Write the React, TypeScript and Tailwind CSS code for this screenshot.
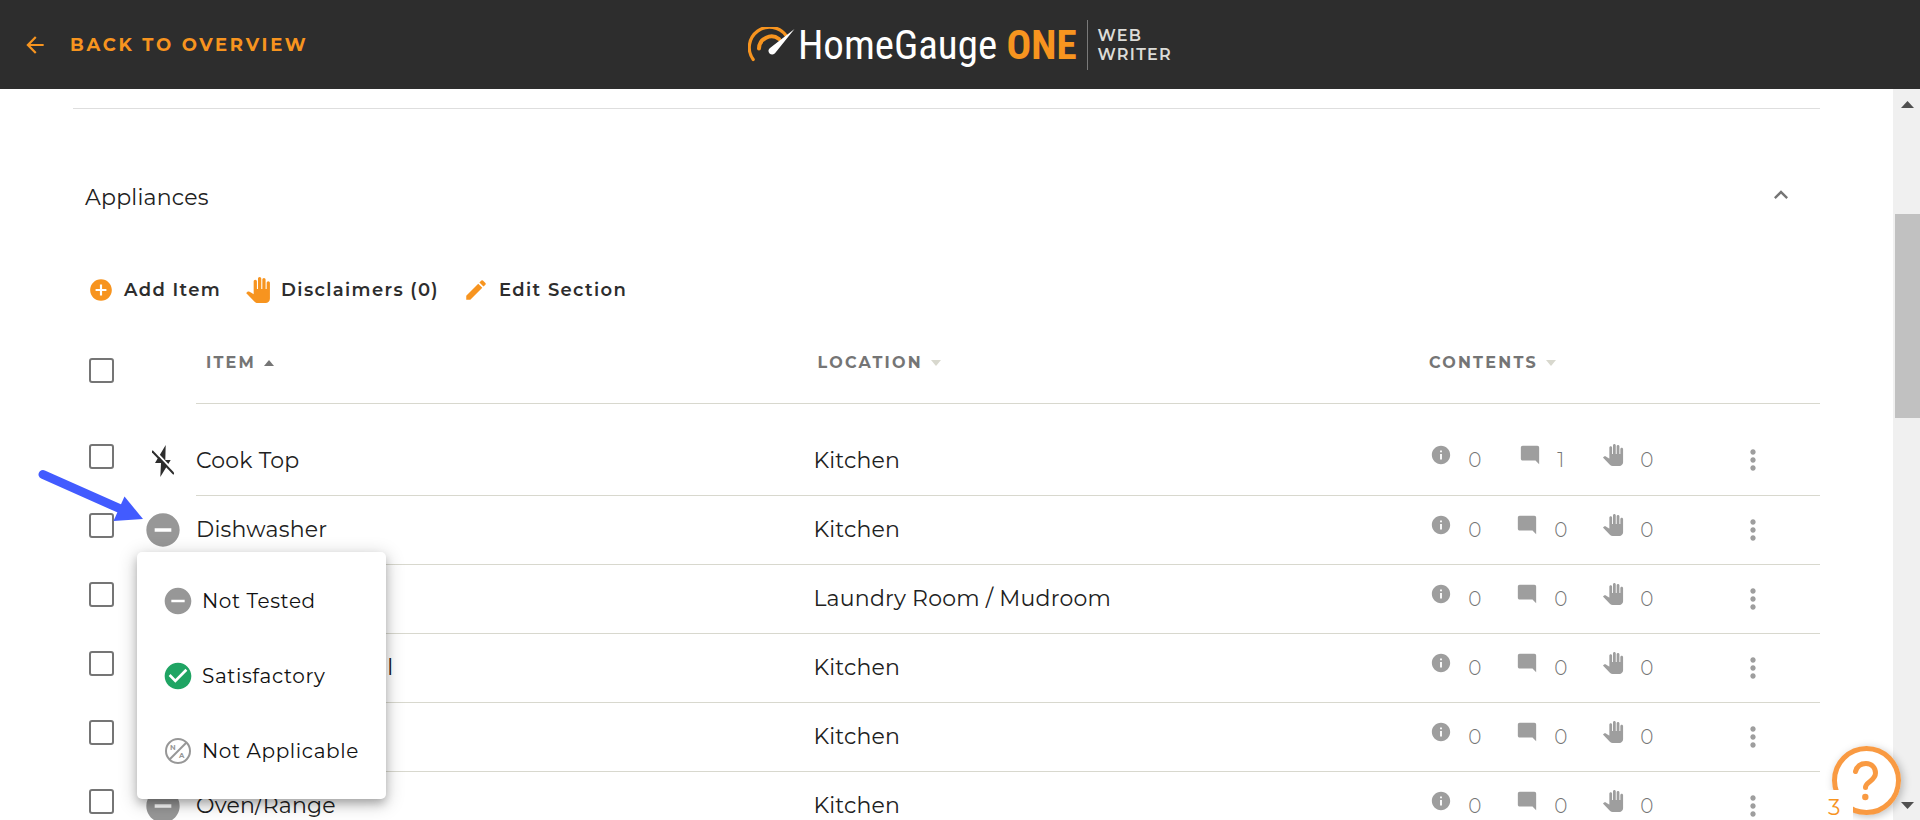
import { useState } from "react";
import type { ReactNode } from "react";
import {
  MdAddCircle,
  MdArrowBack,
  MdCheckCircle,
  MdEdit,
  MdExpandLess,
  MdInfo,
  MdModeComment,
  MdMoreVert,
  MdPanTool,
  MdRemoveCircle,
} from "react-icons/md";

type Status = "flash" | "not-tested";

interface Item {
  name: string;
  location: string;
  status: Status;
  info: number;
  comments: number;
  disclaimers: number;
}

const ITEMS: Item[] = [
  { name: "Cook Top", location: "Kitchen", status: "flash", info: 0, comments: 1, disclaimers: 0 },
  { name: "Dishwasher", location: "Kitchen", status: "not-tested", info: 0, comments: 0, disclaimers: 0 },
  { name: "", location: "Laundry Room / Mudroom", status: "not-tested", info: 0, comments: 0, disclaimers: 0 },
  { name: "Garbage Disposal", location: "Kitchen", status: "not-tested", info: 0, comments: 0, disclaimers: 0 },
  { name: "", location: "Kitchen", status: "not-tested", info: 0, comments: 0, disclaimers: 0 },
  { name: "Oven/Range", location: "Kitchen", status: "not-tested", info: 0, comments: 0, disclaimers: 0 },
];

function Logo() {
  return (
    <div className="flex items-center">
      <svg className="h-9 w-12" viewBox="0 0 48 36" fill="none" strokeLinecap="round">
        <path d="M5.2 32.500A20 20 0 0 1 38 8.500" stroke="#f7941f" strokeWidth="3.200" />
        <path d="M11 21.500A12.500 12.500 0 0 1 31 12" stroke="#f7941f" strokeWidth="4" />
        <path d="M46.500 2L27.200 26A3.700 3.700 0 1 1 22 20.900Z" fill="#fff" />
      </svg>
      <span className="ml-0.5 font-['Roboto_Condensed',Roboto,sans-serif] text-[41px] leading-[48px] text-white">
        HomeGauge <b className="text-[#f7941f]">ONE</b>
      </span>
      <div className="ml-[10px] h-[50px] border-l border-[#7a7a7a]" />
      <span className="ml-[10px] text-base leading-[19px] font-semibold tracking-[0.08em] text-[#dcdcd8]">
        WEB
        <br />
        WRITER
      </span>
    </div>
  );
}

function CheckBox({ label }: { label: string }) {
  return (
    <input
      type="checkbox"
      aria-label={label}
      className="block size-[25px] appearance-none rounded-[3px] border-2 border-[#757575] bg-white checked:bg-[#f7941f]"
    />
  );
}

function ToolButton({ icon, children }: { icon: ReactNode; children: ReactNode }) {
  return (
    <button className="flex items-center gap-[10px] text-lg font-semibold tracking-[0.075em] text-[#2d2d2d]">
      {icon}
      {children}
    </button>
  );
}

function SortHeader({ label, active }: { label: string; active?: boolean }) {
  return (
    <button className="flex items-center gap-2 pl-[10px] text-base font-bold tracking-[0.14em] text-[#757575]">
      {label}
      <svg className="h-[6px] w-[10px]" viewBox="0 0 10 6">
        {active ? <path d="M0 6L5 0L10 6Z" fill="#757575" /> : <path d="M0 0H10L5 6Z" fill="#d8d8ce" />}
      </svg>
    </button>
  );
}

function Count({ icon, value }: { icon: ReactNode; value: number }) {
  return (
    <span className="flex w-[86px] items-center justify-center gap-4">
      <span className="-mt-2.5">{icon}</span>
      {value}
    </span>
  );
}

function FlashOffIcon() {
  return (
    <svg className="mx-[9px] h-8 w-[22px]" viewBox="0 0 22 32">
      <path d="M13.700 0L3 18H9L8.300 32L18.700 15H13.300Z" fill="#2d2d2d" />
      <path d="M2 5L22 26.500" stroke="#fff" strokeWidth="2" />
      <path d="M0 6L22 29" stroke="#2d2d2d" strokeWidth="2" />
    </svg>
  );
}

function NotApplicableIcon() {
  return (
    <svg className="size-[26px]" viewBox="0 0 26 26" fill="none" stroke="#979797" strokeWidth="2">
      <circle cx="13" cy="13" r="12" />
      <path d="M4.500 21.500L21.500 4.500" />
      <text x="5" y="12" fontSize="7" fontWeight="700" fill="#979797" stroke="none">N</text>
      <text x="14" y="20" fontSize="7" fontWeight="700" fill="#979797" stroke="none">A</text>
    </svg>
  );
}

function StatusMenu() {
  return (
    <ul
      role="menu"
      className="absolute top-[214px] left-16 z-10 w-[249px] rounded-[5px] bg-white py-[11px] shadow-[0_5px_10px_-1px_rgba(0,0,0,0.25),0_4px_18px_2px_rgba(0,0,0,0.18)]"
    >
      {[
        { label: "Not Tested", icon: <MdRemoveCircle className="size-8 text-[#979797]" /> },
        { label: "Satisfactory", icon: <MdCheckCircle className="size-8 text-[#1fa463]" /> },
        { label: "Not Applicable", icon: <NotApplicableIcon /> },
      ].map((option) => (
        <li key={option.label} role="none">
          <button
            role="menuitem"
            className="flex h-[75px] w-full items-center gap-2 pl-[25px] text-xl tracking-[0.03em] text-[#111111]"
          >
            <span className="flex w-8 justify-center">{option.icon}</span>
            {option.label}
          </button>
        </li>
      ))}
    </ul>
  );
}

function PointerArrow() {
  return (
    <svg className="pointer-events-none absolute top-[131px] -left-[35px] h-[54px] w-[108px]" viewBox="0 0 108 54">
      <path d="M5 5.500L85 41" stroke="#425bff" strokeWidth="9" strokeLinecap="round" />
      <path d="M105 50L86.500 27.500L75.500 52Z" fill="#425bff" />
    </svg>
  );
}

function ItemTable() {
  return (
    <div className="relative mt-[34px]">
      <table className="w-full table-fixed border-collapse text-left">
        <colgroup>
          <col className="w-[72px]" />
          <col className="w-[51px]" />
          <col className="w-[35%]" />
          <col className="w-[35%]" />
          <col />
          <col className="w-[134px]" />
        </colgroup>
        <thead>
          <tr className="h-[65px]">
            <th className="pl-4"><CheckBox label="Select all items" /></th>
            <th />
            <th className="border-b border-[#d8d8ce] pb-3.5"><SortHeader label="ITEM" active /></th>
            <th className="border-b border-[#d8d8ce] pb-3.5"><SortHeader label="LOCATION" /></th>
            <th className="border-b border-[#d8d8ce] pb-3.5"><SortHeader label="CONTENTS" /></th>
            <th className="border-b border-[#d8d8ce]" />
          </tr>
        </thead>
        <tbody>
          <tr className="h-[23px]"><td colSpan={6} /></tr>
          {ITEMS.map((item, i) => (
            <tr key={i} className="h-[69px] text-[22px] tracking-[0.01em] text-[#212121]">
              <td className="pb-2 pl-4"><CheckBox label={`Select item ${i + 1}`} /></td>
              <td>
                <button aria-label={`Status of item ${i + 1}`} className="-ml-0.5 block">
                  {item.status === "flash" ? <FlashOffIcon /> : <MdRemoveCircle className="size-10 text-[#979797]" />}
                </button>
              </td>
              <td className="border-b border-[#d8d8ce]">{item.name}</td>
              <td className="border-b border-[#d8d8ce] pl-[6px]">{item.location}</td>
              <td className="border-b border-[#d8d8ce]">
                <div className="-ml-[6px] flex text-xl font-light text-[#757575]">
                  <Count icon={<MdInfo className="size-[22px] text-[#9e9e9e]" />} value={item.info} />
                  <Count icon={<MdModeComment className="size-[22px] text-[#9e9e9e]" />} value={item.comments} />
                  <Count icon={<MdPanTool className="size-[22px] text-[#9e9e9e]" />} value={item.disclaimers} />
                </div>
              </td>
              <td className="border-b border-[#d8d8ce]">
                <button aria-label={`Actions for item ${i + 1}`} className="ml-[51px] block">
                  <MdMoreVert className="size-8 text-[#9e9e9e]" />
                </button>
              </td>
            </tr>
          ))}
        </tbody>
      </table>
      <PointerArrow />
      <StatusMenu />
    </div>
  );
}

function ScrollTrack() {
  return (
    <div className="flex w-[27px] shrink-0 flex-col items-center bg-[#f0f0f0] pt-3 pb-[11px]">
      <svg className="ml-0.5 h-[7px] w-[13px]" viewBox="0 0 13 7"><path d="M0 7L6.500 0L13 7Z" fill="#505050" /></svg>
      <div className="mt-[106px] h-[204px] w-[25px] self-end bg-[#c1c1c1]" />
      <svg className="mt-auto ml-0.5 h-[7px] w-[13px]" viewBox="0 0 13 7"><path d="M0 0L6.500 7L13 0Z" fill="#505050" /></svg>
    </div>
  );
}

function HelpButton() {
  return (
    <button
      aria-label="Help"
      className="fixed right-[19px] bottom-[5px] z-20 size-[69px] rounded-full bg-white shadow-[2px_2px_8px_rgba(0,0,0,0.25)]"
    >
      <svg className="size-full" viewBox="0 0 69 69" fill="none" stroke="#f99a42" strokeWidth="5">
        <circle cx="34.500" cy="34.500" r="32" />
        <path d="M23.500 25.500C25 20 29 17.500 34 17.500C40 17.500 43.500 22 43.500 27C43.500 35 33.500 35.500 33.500 41.500" strokeLinecap="round" />
        <circle cx="33.300" cy="51" r="3.200" fill="#f99a42" stroke="none" />
      </svg>
      <span className="absolute top-[44px] -left-[6px] h-[31px] w-[27px] bg-white pl-0.5 text-left text-[22px] leading-9 text-[#f7941f]">
        3
      </span>
    </button>
  );
}

export default function App() {
  const [open, setOpen] = useState(true);

  return (
    <div className="flex h-screen flex-col overflow-hidden bg-white font-['Montserrat','Inter',sans-serif]">
      <header className="grid h-[89px] shrink-0 grid-cols-[1fr_auto_1fr] items-center bg-[#2d2d2d]">
        <a href="#overview" className="flex items-center gap-[22px] pl-[22px] text-lg font-bold tracking-[0.15em] text-[#f7941f]">
          <MdArrowBack className="size-[26px]" />
          BACK TO OVERVIEW
        </a>
        <Logo />
      </header>

      <div className="flex min-h-0 flex-1">
        <main className="min-w-0 flex-1 overflow-hidden px-[73px] pt-[19px]">
          <section className="border-t border-[#dedede]">
            <div className="flex items-start justify-between pt-[72px] pr-[25px] pl-3">
              <h2 className="text-[22px] tracking-[0.01em] text-[#212121]">Appliances</h2>
              <button aria-label="Collapse section" onClick={() => setOpen(!open)}>
                <MdExpandLess className="size-7 text-[#757575]" />
              </button>
            </div>
            <div className="mt-[62px] flex gap-6 pl-[15px]">
              <ToolButton icon={<MdAddCircle className="size-[26px] text-[#f7941f]" />}>Add Item</ToolButton>
              <ToolButton icon={<MdPanTool className="size-[26px] text-[#f7941f]" />}>Disclaimers (0)</ToolButton>
              <ToolButton icon={<MdEdit className="size-[26px] text-[#f7941f]" />}>Edit Section</ToolButton>
            </div>
            {open && <ItemTable />}
          </section>
        </main>
        <ScrollTrack />
      </div>
      <HelpButton />
    </div>
  );
}
